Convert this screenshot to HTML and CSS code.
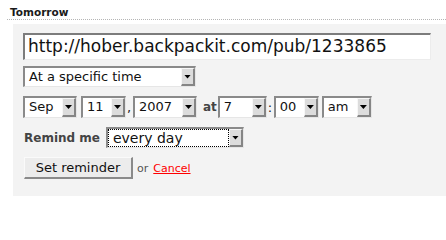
FILE: index.html
```html
<!DOCTYPE html>
<html>
<head>
<meta charset="utf-8">
<link rel="stylesheet" href="styles.css">
</head>
<body>
<div class="section">
  <h3 class="title">Tomorrow</h3>
  <div class="panel">
    <div class="url">http://hober.backpackit.com/pub/1233865</div>
    <div class="row">
      <span class="sel w-when"><span class="val">At a specific time</span><span class="arr"></span></span>
    </div>
    <div class="row date">
      <span class="sel w-month"><span class="val">Sep</span><span class="arr"></span></span>
      <span class="sel w-day"><span class="val">11</span><span class="arr"></span></span>
      <span class="sep">,</span>
      <span class="sel w-year"><span class="val">2007</span><span class="arr"></span></span>
      <span class="at">at</span>
      <span class="sel w-hour"><span class="val">7</span><span class="arr"></span></span>
      <span class="sep">:</span>
      <span class="sel w-min"><span class="val">00</span><span class="arr"></span></span>
      <span class="sel w-ampm"><span class="val">am</span><span class="arr"></span></span>
    </div>
    <div class="row remind">
      <span class="label">Remind me</span>
      <span class="sel w-freq focused"><span class="val">every day</span><span class="arr"></span></span>
    </div>
    <div class="row actions">
      <span class="btn">Set reminder</span>
      <span class="or">or</span>
      <a class="cancel" href="#">Cancel</a>
    </div>
  </div>
</div>
</body>
</html>
```

FILE: styles.css
```css
html, body {
  margin: 0;
  padding: 0;
  background: #fff;
}

body {
  font-family: "DejaVu Sans", "Liberation Sans", sans-serif;
  color: #222;
  width: 446px;
  height: 202px;
  overflow: hidden;
}

.section {
  padding-top: 6px;
}

.title {
  margin: 0 0 0 7px;
  padding-left: 3px;
  font-size: 10.5px;
  line-height: 13px;
  font-weight: bold;
  color: #1a1a1a;
  border-bottom: 1px dotted #b5b5b5;
}

.panel {
  margin: 4px 0 0 13px;
  background: #f3f3f3;
  padding: 9px 0 17px 10px;
}

.url {
  box-sizing: border-box;
  width: 408px;
  height: 27px;
  background: #fff;
  border-top: 2px solid #7c7c7c;
  border-left: 2px solid #7c7c7c;
  border-right: 1px solid #ececec;
  border-bottom: 1px solid #ececec;
  font-size: 17px;
  line-height: 23px;
  padding-left: 3px;
  color: #111;
  white-space: nowrap;
}

.row {
  display: flex;
  align-items: center;
  margin-top: 9px;
}

.panel > .row:nth-child(2) {
  margin-top: 6px;
}

.sel {
  box-sizing: border-box;
  display: inline-flex;
  align-items: stretch;
  height: 21px;
  background: #fff;
  border-top: 2px solid #8a8a8a;
  border-left: 2px solid #8a8a8a;
  border-right: 1px solid #e6e6e6;
  border-bottom: 1px solid #e6e6e6;
}

.date .sel {
  height: 22px;
}

.val {
  flex: 1;
  font-size: 13px;
  line-height: 18px;
  padding-left: 4px;
  color: #111;
  white-space: nowrap;
  overflow: hidden;
}

.arr {
  box-sizing: border-box;
  width: 14px;
  background: #dcdcdc;
  border-top: 1px solid #f7f7f7;
  border-left: 1px solid #f7f7f7;
  border-right: 2px solid #858585;
  border-bottom: 2px solid #858585;
  display: flex;
  align-items: center;
  justify-content: center;
}

.arr::after {
  content: "";
  width: 7px;
  height: 4px;
  background: #000;
  clip-path: polygon(0 0, 100% 0, 50% 100%);
}

.w-when { width: 173px; }
.w-month { width: 54px; margin-right: 4px; }
.w-day { width: 45px; }
.w-year { width: 64px; }
.w-hour { width: 49px; }
.w-min { width: 45px; }
.w-ampm { width: 50px; margin-left: 3px; }
.w-freq { width: 138px; }

.focused .val {
  outline: 1px dotted #000;
  outline-offset: -1px;
  font-size: 14px;
  padding-left: 5px;
}

.sep {
  font-size: 13px;
  width: 6px;
  text-align: left;
  padding-left: 1px;
  color: #222;
}

.date .sep:nth-of-type(2) {
  width: 3px;
  padding-left: 0;
}

.at {
  font-size: 12px;
  font-weight: bold;
  color: #444;
  margin: 0 1px 0 6px;
}

.label {
  font-size: 12px;
  font-weight: bold;
  color: #444;
  margin: 0 6px 0 1px;
}

.actions {
  height: 22px;
}

.btn {
  box-sizing: border-box;
  display: inline-block;
  width: 109px;
  height: 22px;
  margin-left: 1px;
  background: #ececec;
  border-top: 1px solid #fafafa;
  border-left: 1px solid #fafafa;
  border-right: 2px solid #8a8a8a;
  border-bottom: 2px solid #8a8a8a;
  font-size: 13px;
  line-height: 19px;
  text-align: center;
  color: #111;
}

.or {
  font-size: 11px;
  color: #555;
  margin: 0 5px 0 4px;
}

.cancel {
  font-size: 11px;
  color: #f00;
  text-decoration: underline;
}
```
